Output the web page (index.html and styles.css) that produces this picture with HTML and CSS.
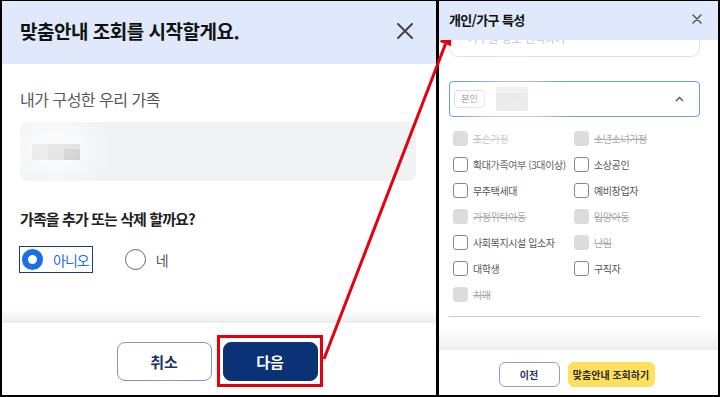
FILE: index.html
```html
<!DOCTYPE html>
<html lang="ko">
  <head>
    <meta charset="UTF-8" />
    <meta name="viewport" content="width=device-width, initial-scale=1.0" />
    <title>맞춤안내 조회</title>
    <link rel="stylesheet" href="styles.css">
  </head>
  <body>
    <div class="screen">
      <section class="panel panel-main">
        <header class="main-head">
          <h1>맞춤안내 조회를 시작할게요.</h1>
          <span class="close close-lg">
            <svg width="16" height="16" viewBox="0 0 16 16"><path d="M1 1L15 15M15 1L1 15" /></svg>
          </span>
        </header>
        <div class="main-body">
          <p class="label">내가 구성한 우리 가족</p>
          <div class="family-box">
            <span class="mosaic">
              <i class="m1"></i><i class="m2"></i><i class="m3"></i>
            </span>
          </div>
          <p class="question">가족을 추가 또는 삭제 할까요?</p>
          <div class="radios">
            <label class="radio radio-on"><span class="dot"></span>아니오</label>
            <label class="radio"><span class="dot"></span>네</label>
          </div>
          <span class="glow glow-left"></span>
        </div>
        <footer class="main-foot">
          <button class="btn btn-line">취소</button>
          <button class="btn btn-navy">다음</button>
        </footer>
      </section>

      <section class="panel panel-side">
        <header class="side-head">
          <h2>개인/가구 특성</h2>
          <span class="close close-sm">
            <svg width="10" height="10" viewBox="0 0 10 10"><path d="M1 1L9 9M9 1L1 9" /></svg>
          </span>
        </header>
        <div class="side-body">
          <div class="prev-box"><span>가구원 정보 선택하기</span></div>
          <div class="select">
            <span class="chip">본인</span>
            <span class="mosaic-sm"></span>
            <svg class="chevron" width="9" height="6" viewBox="0 0 9 6"><path d="M1 5L4.5 1.5L8 5" /></svg>
          </div>
          <div class="checks">
            <label class="check off"><span class="box"></span>조손가정</label>
            <label class="check off"><span class="box"></span>소년소녀가정</label>
            <label class="check"><span class="box"></span>확대가족여부 (3대이상)</label>
            <label class="check"><span class="box"></span>소상공인</label>
            <label class="check"><span class="box"></span>무주택세대</label>
            <label class="check"><span class="box"></span>예비창업자</label>
            <label class="check off"><span class="box"></span>가정위탁아동</label>
            <label class="check off"><span class="box"></span>입양아동</label>
            <label class="check"><span class="box"></span>사회복지시설 입소자</label>
            <label class="check off"><span class="box"></span>난임</label>
            <label class="check"><span class="box"></span>대학생</label>
            <label class="check"><span class="box"></span>구직자</label>
            <label class="check off"><span class="box"></span>치매</label>
          </div>
          <hr class="divider" />
          <span class="glow glow-right"></span>
        </div>
        <footer class="side-foot">
          <button class="sbtn sbtn-line">이전</button>
          <button class="sbtn sbtn-yellow">맞춤안내 조회하기</button>
        </footer>
      </section>

      <!-- red annotation drawn over both panels -->
      <svg class="annotation" width="720" height="397" viewBox="0 0 720 397">
        <rect x="218.5" y="336.5" width="103" height="49" />
        <line x1="324" y1="359" x2="445.5" y2="44" />
        <polygon points="451,29 451.2,46.2 439.6,41.8" />
      </svg>
    </div>
  </body>
</html>
```

FILE: styles.css
```css
* {
  box-sizing: border-box;
}
html,
body {
  margin: 0;
  padding: 0;
}
body {
  font-family: "Noto Sans CJK KR", "Noto Sans", sans-serif;
  background: #000;
}
p,
h1,
h2 {
  margin: 0;
}
button {
  font-family: inherit;
  cursor: pointer;
}

.screen {
  position: relative;
  width: 720px;
  height: 397px;
  display: flex;
  gap: 3px;
  padding: 1px 2px 2px 2px;
  background: #000;
}
.panel {
  position: relative;
  display: flex;
  flex-direction: column;
  background: #fff;
  overflow: hidden;
}
.panel-main {
  width: 434px;
}
.panel-side {
  flex: 1;
}

.close svg path {
  fill: none;
  stroke: #444;
  stroke-linecap: round;
}
.close-lg svg path {
  stroke-width: 2;
}
.close-sm svg path {
  stroke-width: 1.5;
  stroke: #555;
}

/* left panel */
.main-head {
  height: 63px;
  flex: none;
  display: flex;
  align-items: center;
  justify-content: space-between;
  padding: 0 23px 4px 18px;
  background: #dfe9fb;
}
.main-head h1 {
  font-size: 19px;
  font-weight: 700;
  letter-spacing: -0.5px;
  color: #111;
}
.close {
  display: flex;
}
.main-body {
  position: relative;
  flex: 1;
  padding: 25px 20px 0 18px;
}
.label {
  font-size: 16px;
  line-height: 20px;
  color: #555;
  letter-spacing: -0.5px;
}
.family-box {
  margin-top: 13px;
  height: 59px;
  background: #f1f2f4;
  border-radius: 8px;
  padding: 22px 0 0 12px;
}
.mosaic {
  display: flex;
}
.mosaic i {
  width: 16px;
  height: 16px;
}
.mosaic .m1 {
  background: #d6d6d6;
}
.mosaic .m2 {
  background: #c9c9c9;
}
.mosaic .m3 {
  background: linear-gradient(#c4c4c4 30%, #a9a9a9 30%);
}
.question {
  margin-top: 29px;
  font-size: 15px;
  line-height: 18px;
  font-weight: 700;
  color: #222;
  letter-spacing: -0.9px;
}
.radios {
  display: flex;
  align-items: center;
  gap: 35px;
  margin-top: 21px;
}
.radio {
  display: flex;
  align-items: center;
  gap: 10px;
  font-size: 14px;
  line-height: 20px;
  letter-spacing: -1px;
  color: #555;
}
.radio .dot {
  width: 21px;
  height: 21px;
  border-radius: 50%;
  border: 1px solid #666;
  background: #fff;
}
.radio-on {
  color: #1b6fe2;
  outline: 1.5px solid #1c3d7c;
  outline-offset: 2px;
  margin-left: 2px;
  padding-right: 1px;
}
.radio-on .dot {
  border: 6px solid #1b6fe2;
}
.glow {
  position: absolute;
  border-radius: 50%;
  background: rgba(255, 255, 255, 0.55);
  filter: blur(12px);
  pointer-events: none;
}
.glow-left {
  left: 8px;
  top: 50px;
  width: 90px;
  height: 70px;
}
.main-foot {
  position: relative;
  flex: none;
  height: 72px;
  display: flex;
  justify-content: center;
  gap: 11px;
  padding: 19px 4px 0 0;
  background: #fff;
}
.main-foot::before {
  content: "";
  position: absolute;
  left: 0;
  right: 0;
  top: -14px;
  height: 14px;
  background: linear-gradient(rgba(236, 236, 236, 0), #ececec);
}
.btn {
  width: 95px;
  height: 39px;
  border-radius: 8px;
  font-size: 15px;
  font-weight: 700;
}
.btn-line {
  background: #fff;
  border: 1px solid #7e97c4;
  color: #1c3563;
}
.btn-navy {
  background: #0b3274;
  border: 1px solid #0b3274;
  color: #fff;
}

/* right panel */
.side-head {
  position: relative;
  z-index: 2;
  height: 39px;
  flex: none;
  display: flex;
  align-items: center;
  justify-content: space-between;
  padding: 0 16px 3px 10px;
  background: #dfe9fb;
}
.side-head h2 {
  font-size: 13px;
  font-weight: 700;
  letter-spacing: -0.6px;
  color: #111;
}
.side-body {
  position: relative;
  flex: 1;
  padding: 0 18px 0 10px;
}
.prev-box {
  margin-top: -22px;
  height: 39px;
  border: 1px solid #e2e2e2;
  border-radius: 9px;
  padding: 11px 0 0 18px;
  font-size: 11px;
  color: #c4c4c4;
}
.select {
  position: relative;
  margin-top: 24px;
  height: 36px;
  border: 1.5px solid #6c9ae0;
  border-radius: 4px;
  display: flex;
  align-items: center;
  padding: 0 15px 0 4px;
}
.chip {
  width: 31px;
  height: 18px;
  border: 1px solid #dcdcdc;
  border-radius: 4px;
  font-size: 9px;
  line-height: 16px;
  text-align: center;
  color: #888;
}
.mosaic-sm {
  width: 32px;
  height: 24px;
  margin-left: 11px;
  background: linear-gradient(#e6e6e6 25%, #d8d8d8 25%);
}
.chevron {
  margin-left: auto;
}
.chevron path {
  fill: none;
  stroke: #555;
  stroke-width: 1.4;
}
.checks {
  display: grid;
  grid-template-columns: 121px 1fr;
  row-gap: 11px;
  margin-top: 14px;
  padding-left: 4px;
}
.check {
  display: flex;
  align-items: center;
  gap: 5px;
  height: 15px;
  font-size: 10px;
  color: #555;
  letter-spacing: -0.4px;
  white-space: nowrap;
}
.check .box {
  flex: none;
  width: 15px;
  height: 15px;
  border: 1px solid #888;
  border-radius: 3px;
  background: #fff;
}
.check.off {
  color: #aaa;
  text-decoration: line-through;
}
.check.off .box {
  background: #dcdcdc;
  border-color: #dcdcdc;
}
.divider {
  margin: 14px 0 0;
  border: 0;
  border-top: 1px solid #c9c9c9;
}
.glow-right {
  left: 30px;
  top: 30px;
  width: 90px;
  height: 90px;
  background: rgba(255, 255, 255, 0.5);
}
.side-foot {
  position: relative;
  flex: none;
  height: 45px;
  display: flex;
  justify-content: center;
  gap: 8px;
  padding: 12px 4px 0 0;
  background: #fff;
}
.side-foot::before {
  content: "";
  position: absolute;
  left: 0;
  right: 0;
  top: -22px;
  height: 22px;
  background: linear-gradient(rgba(238, 238, 238, 0), #eeeeee);
}
.sbtn {
  height: 25px;
  border-radius: 6px;
  font-size: 10px;
  font-weight: 700;
  padding: 0;
}
.sbtn-line {
  width: 61px;
  background: #fff;
  border: 1px solid #8da2c9;
  color: #1c3563;
}
.sbtn-yellow {
  width: 87px;
  background: #fde05b;
  border: 1px solid #fde05b;
  color: #2a2a2a;
}

.annotation {
  position: absolute;
  left: 0;
  top: 0;
  pointer-events: none;
}
.annotation rect {
  fill: none;
  stroke: #e3000f;
  stroke-width: 3;
}
.annotation line {
  stroke: #e3000f;
  stroke-width: 3;
}
.annotation polygon {
  fill: #e3000f;
}
```
